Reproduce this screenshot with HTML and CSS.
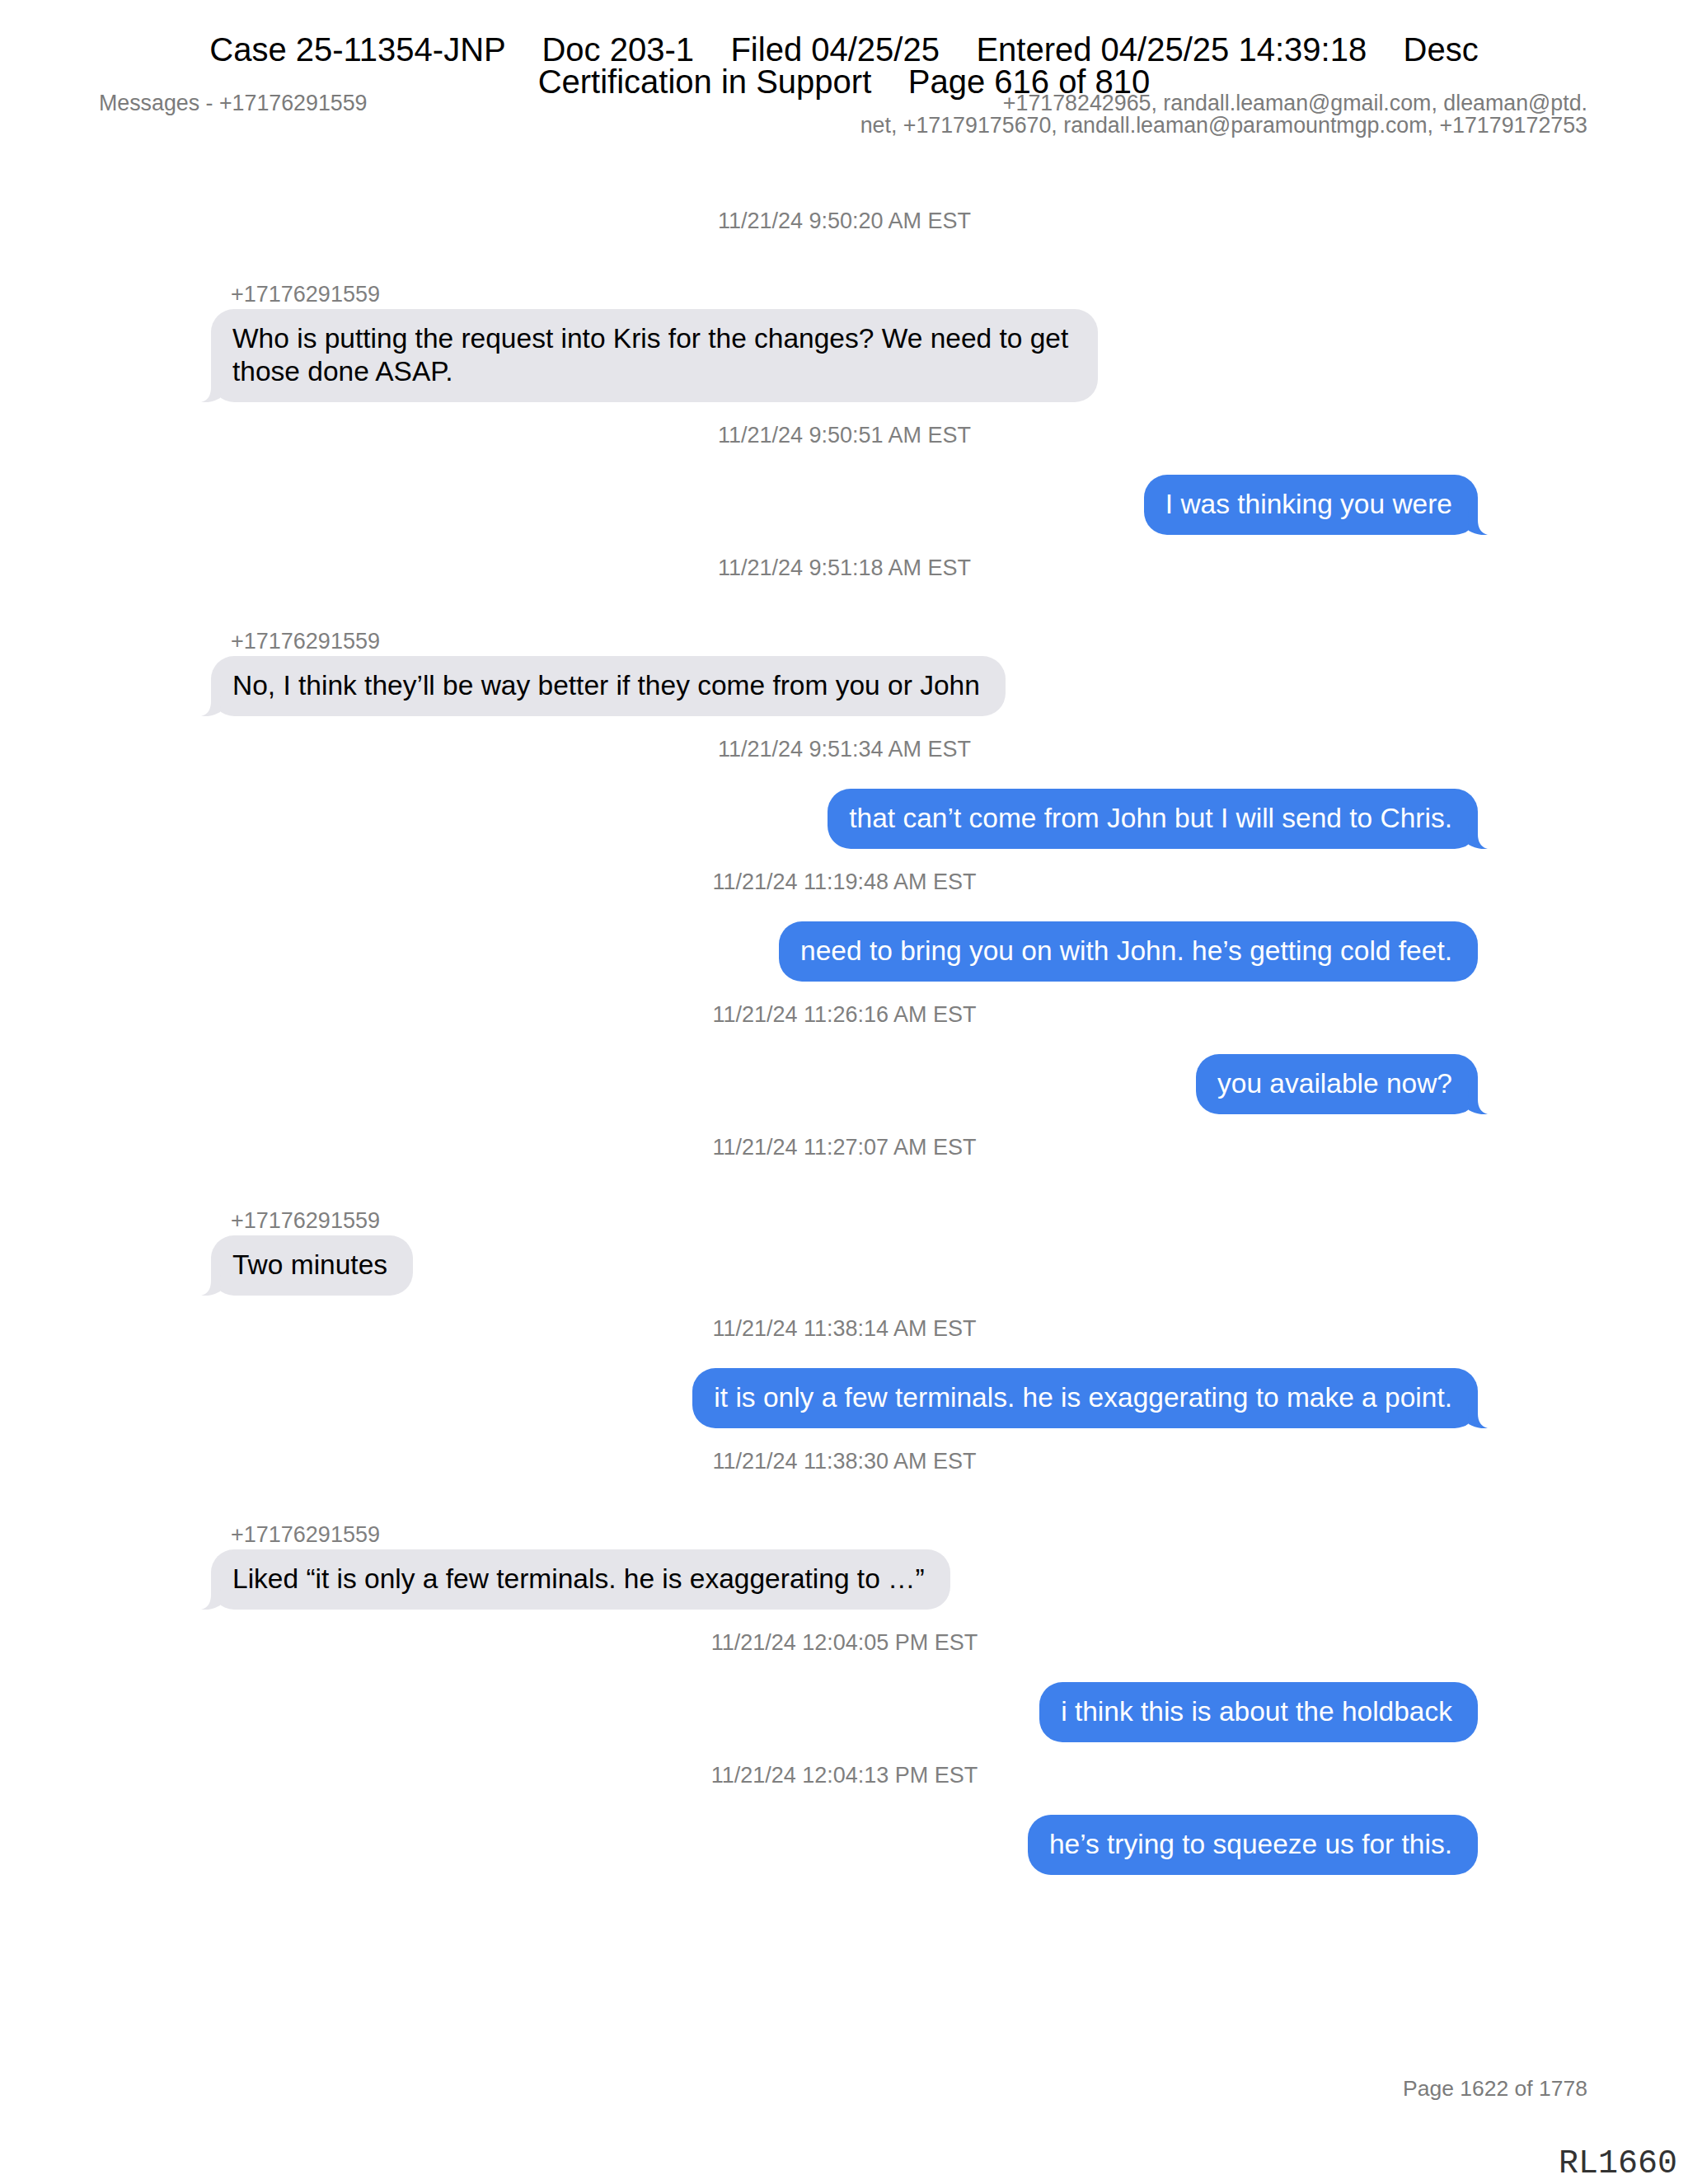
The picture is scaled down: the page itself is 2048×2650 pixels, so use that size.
FILE: index.html
```
<!DOCTYPE html>
<html lang="en">
<head>
<meta charset="utf-8">
<title>Messages - +17176291559</title>
<link rel="stylesheet" href="styles.css">
</head>
<body>
<div class="page">
  <div class="stamp">
    <span class="stamp-line">Case 25-11354-JNP    Doc 203-1    Filed 04/25/25    Entered 04/25/25 14:39:18    Desc</span>
    <span class="stamp-line">Certification in Support    Page 616 of 810</span>
  </div>

  <header class="doc-head">
    <div class="doc-title">Messages - +17176291559</div>
    <div class="participants">+17178242965, randall.leaman@gmail.com, dleaman@ptd.<br>net, +17179175670, randall.leaman@paramountmgp.com, +17179172753</div>
  </header>

  <main class="thread">
    <section class="group">
      <div class="ts">11/21/24 9:50:20 AM EST</div>
      <div class="sender">+17176291559</div>
      <div class="row recv">
        <div class="bubble recv">Who is putting the request into Kris for the changes? We need to get those done ASAP.<svg class="tail" viewBox="0 0 24 30"><path d="M12 0 L12 12 C12 22 8 28 0 30 C7 31 16 29 23 25 L24 0 Z"/></svg></div>
      </div>
    </section>

    <section class="group">
      <div class="ts">11/21/24 9:50:51 AM EST</div>
      <div class="row sent">
        <div class="bubble sent">I was thinking you were<svg class="tail" viewBox="0 0 24 30"><path d="M12 0 L12 12 C12 22 16 28 24 30 C17 31 8 29 1 25 L0 0 Z"/></svg></div>
      </div>
    </section>

    <section class="group">
      <div class="ts">11/21/24 9:51:18 AM EST</div>
      <div class="sender">+17176291559</div>
      <div class="row recv">
        <div class="bubble recv">No, I think they’ll be way better if they come from you or John<svg class="tail" viewBox="0 0 24 30"><path d="M12 0 L12 12 C12 22 8 28 0 30 C7 31 16 29 23 25 L24 0 Z"/></svg></div>
      </div>
    </section>

    <section class="group">
      <div class="ts">11/21/24 9:51:34 AM EST</div>
      <div class="row sent">
        <div class="bubble sent">that can’t come from John but I will send to Chris.<svg class="tail" viewBox="0 0 24 30"><path d="M12 0 L12 12 C12 22 16 28 24 30 C17 31 8 29 1 25 L0 0 Z"/></svg></div>
      </div>
    </section>

    <section class="group">
      <div class="ts">11/21/24 11:19:48 AM EST</div>
      <div class="row sent">
        <div class="bubble sent">need to bring you on with John. he’s getting cold feet.</div>
      </div>
    </section>

    <section class="group">
      <div class="ts">11/21/24 11:26:16 AM EST</div>
      <div class="row sent">
        <div class="bubble sent">you available now?<svg class="tail" viewBox="0 0 24 30"><path d="M12 0 L12 12 C12 22 16 28 24 30 C17 31 8 29 1 25 L0 0 Z"/></svg></div>
      </div>
    </section>

    <section class="group">
      <div class="ts">11/21/24 11:27:07 AM EST</div>
      <div class="sender">+17176291559</div>
      <div class="row recv">
        <div class="bubble recv">Two minutes<svg class="tail" viewBox="0 0 24 30"><path d="M12 0 L12 12 C12 22 8 28 0 30 C7 31 16 29 23 25 L24 0 Z"/></svg></div>
      </div>
    </section>

    <section class="group">
      <div class="ts">11/21/24 11:38:14 AM EST</div>
      <div class="row sent">
        <div class="bubble sent">it is only a few terminals. he is exaggerating to make a point.<svg class="tail" viewBox="0 0 24 30"><path d="M12 0 L12 12 C12 22 16 28 24 30 C17 31 8 29 1 25 L0 0 Z"/></svg></div>
      </div>
    </section>

    <section class="group">
      <div class="ts">11/21/24 11:38:30 AM EST</div>
      <div class="sender">+17176291559</div>
      <div class="row recv">
        <div class="bubble recv">Liked “it is only a few terminals. he is exaggerating to …”<svg class="tail" viewBox="0 0 24 30"><path d="M12 0 L12 12 C12 22 8 28 0 30 C7 31 16 29 23 25 L24 0 Z"/></svg></div>
      </div>
    </section>

    <section class="group">
      <div class="ts">11/21/24 12:04:05 PM EST</div>
      <div class="row sent">
        <div class="bubble sent">i think this is about the holdback</div>
      </div>
    </section>

    <section class="group">
      <div class="ts">11/21/24 12:04:13 PM EST</div>
      <div class="row sent">
        <div class="bubble sent">he’s trying to squeeze us for this.</div>
      </div>
    </section>
  </main>

  <footer class="doc-foot">Page 1622 of 1778</footer>
  <div class="bates">RL1660</div>
</div>
</body>
</html>
```

FILE: styles.css
```
html, body {
  margin: 0;
  padding: 0;
  background: #ffffff;
}

body {
  font-family: "Liberation Sans", Arial, Helvetica, sans-serif;
  color: #000;
}

.page {
  position: relative;
  width: 2048px;
  height: 2650px;
  overflow: hidden;
}

/* court filing stamp that is printed over the page */
.stamp {
  position: absolute;
  top: 41px;
  left: 0;
  right: 0;
  text-align: center;
  font-size: 40px;
  line-height: 39px;
  color: #000;
  z-index: 2;
}

.stamp-line {
  display: block;
  white-space: pre;
}

.doc-head {
  display: flex;
  justify-content: space-between;
  align-items: flex-start;
  padding: 112px 122px 0 120px;
  font-size: 26.8px;
  line-height: 27px;
  color: #7b7b7b;
}

.participants {
  text-align: right;
}

.thread {
  padding: 87px 255px 0 256px;
}

.group + .group {
  margin-top: 25px;
}

.ts {
  font-size: 27px;
  line-height: 30px;
  text-align: center;
  color: #7f7f7f;
}

.sender {
  margin: 59px 0 3px 24px;
  font-size: 27px;
  line-height: 30px;
  color: #7f7f7f;
}

.row {
  display: flex;
}

.row.sent {
  justify-content: flex-end;
  margin-top: 33px;
}

.row.recv {
  justify-content: flex-start;
}

.bubble {
  position: relative;
  box-sizing: border-box;
  max-width: 1076px;
  padding: 16px 31px 17px 26px;
  border-radius: 28px;
  font-size: 33.5px;
  line-height: 40px;
}

.bubble.sent {
  background: #3e80ec;
  color: #ffffff;
}

.bubble.recv {
  background: #e5e5ea;
  color: #000000;
}

.tail {
  position: absolute;
  bottom: 0;
  width: 24px;
  height: 30px;
  display: block;
}

.bubble.sent .tail {
  right: -12px;
  fill: #3e80ec;
}

.bubble.recv .tail {
  left: -12px;
  fill: #e5e5ea;
}

.doc-foot {
  margin-top: 244px;
  padding-right: 122px;
  text-align: right;
  font-size: 26.5px;
  line-height: 30px;
  color: #7b7b7b;
}

.bates {
  margin-top: 57px;
  padding-right: 13px;
  text-align: right;
  font-family: "Liberation Mono", "Courier New", monospace;
  font-size: 40px;
  line-height: 40px;
  color: #333333;
}
```
